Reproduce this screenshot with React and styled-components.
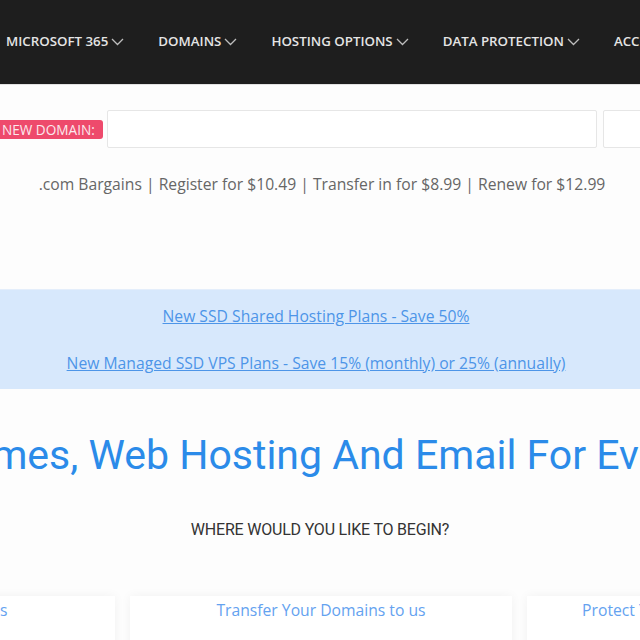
import React from 'react';
import styled, { createGlobalStyle } from 'styled-components';

const GlobalStyle = createGlobalStyle`
  html, body {
    margin: 0;
    padding: 0;
    background: #fdfdfd;
    overflow: hidden;
  }
  body {
    font-family: 'Open Sans', 'Liberation Sans', sans-serif;
  }
`;

const navItems = ['MICROSOFT 365', 'DOMAINS', 'HOSTING OPTIONS', 'DATA PROTECTION', 'ACCOUNT'];

const cards = [
  'Register Your Domains',
  'Transfer Your Domains to us',
  'Protect Your Data With Cloud Backup',
];

const Chevron = () => (
  <svg width="13" height="8" viewBox="0 0 13 8" fill="none">
    <path d="M1 1l5.5 5.5L12 1" stroke="#bdbdbd" strokeWidth="1.3" />
  </svg>
);

export default function App() {
  return (
    <Page>
      <GlobalStyle />
      <NavBar>
        {navItems.map((item) => (
          <NavItem key={item}>
            {item}
            <Chevron />
          </NavItem>
        ))}
      </NavBar>

      <SearchRow>
        <Badge>NEW DOMAIN:</Badge>
        <SearchInput />
        <SideBox />
      </SearchRow>
      <Tagline>
        .com Bargains | Register for $10.49 | Transfer in for $8.99 | Renew for $12.99
      </Tagline>

      <Banner>
        <BannerLink href="#">New SSD Shared Hosting Plans - Save 50%</BannerLink>
        <BannerLink href="#">New Managed SSD VPS Plans - Save 15% (monthly) or 25% (annually)</BannerLink>
      </Banner>

      <HeroRow>
        <Hero>Domain Names, Web Hosting And Email For Everyone</Hero>
      </HeroRow>
      <Begin>WHERE WOULD YOU LIKE TO BEGIN?</Begin>

      <Cards>
        {cards.map((title) => (
          <Card key={title}>
            <CardTitle>{title}</CardTitle>
          </Card>
        ))}
      </Cards>
    </Page>
  );
}

const Page = styled.div`
  width: 640px;
  height: 640px;
  overflow: hidden;
  background: #fdfdfd;
`;

const NavBar = styled.nav`
  height: 82px;
  padding: 0 0 2px 6px;
  background: #1e1e1e;
  border-bottom: 1px solid #e2e2e2;
  display: flex;
  align-items: center;
  gap: 34px;
  white-space: nowrap;
`;

const NavItem = styled.div`
  display: flex;
  align-items: center;
  gap: 3px;
  color: #e4e4e4;
  font-size: 13.3px;
  font-weight: 600;
  svg {
    margin-top: 1px;
  }
`;

const SearchRow = styled.div`
  display: flex;
  align-items: center;
  gap: 4px;
  margin-top: 25px;
  height: 38px;
`;

const Badge = styled.span`
  background: #ee4a6c;
  color: #fbe9ee;
  font-size: 13.6px;
  line-height: 19px;
  padding: 0 8px 0 2px;
  border-radius: 0 3px 3px 0;
  white-space: nowrap;
`;

const SearchInput = styled.div`
  width: 488px;
  height: 36px;
  border: 1px solid #e6e6e6;
  border-radius: 2px;
  background: #fff;
  flex-shrink: 0;
`;

const SideBox = styled(SearchInput)`
  margin-left: 2px;
  width: 120px;
`;

const Tagline = styled.p`
  margin: 25px 0 0;
  text-align: center;
  font-size: 15.7px;
  color: #666;
  padding-left: 4px;
`;

const Banner = styled.div`
  margin-top: 94px;
  height: 99px;
  background: #d7e8fc;
  border-top: 1px solid #e4eefb;
  display: flex;
  flex-direction: column;
  align-items: center;
  justify-content: center;
  gap: 26px;
  padding-right: 8px;
`;

const BannerLink = styled.a`
  color: #4d95e8;
  font-size: 15.7px;
  text-decoration: underline;
  line-height: 21px;
`;

const HeroRow = styled.div`
  display: flex;
  justify-content: center;
  margin-top: 42px;
  padding-right: 90px;
`;

const Hero = styled.h1`
  margin: 0;
  font-family: Roboto, 'Liberation Sans', sans-serif;
  font-weight: 400;
  font-size: 41px;
  line-height: 48px;
  color: #2b8be9;
  white-space: nowrap;
  flex-shrink: 0;
`;

const Begin = styled.h2`
  margin: 41px 0 0;
  text-align: center;
  font-family: Roboto, 'Liberation Sans', sans-serif;
  font-weight: 400;
  font-size: 16px;
  color: #333;
  letter-spacing: -0.2px;
`;

const Cards = styled.div`
  display: flex;
  justify-content: center;
  gap: 15px;
  margin-top: 57px;
  padding-left: 2px;
`;

const Card = styled.div`
  width: 382px;
  height: 100px;
  flex-shrink: 0;
  background: #fff;
  box-shadow: 0 0 10px rgba(0, 0, 0, 0.05);
  display: flex;
  justify-content: center;
  padding-top: 3px;
`;

const CardTitle = styled.span`
  color: #64a2f0;
  font-size: 15.7px;
  white-space: nowrap;
`;
